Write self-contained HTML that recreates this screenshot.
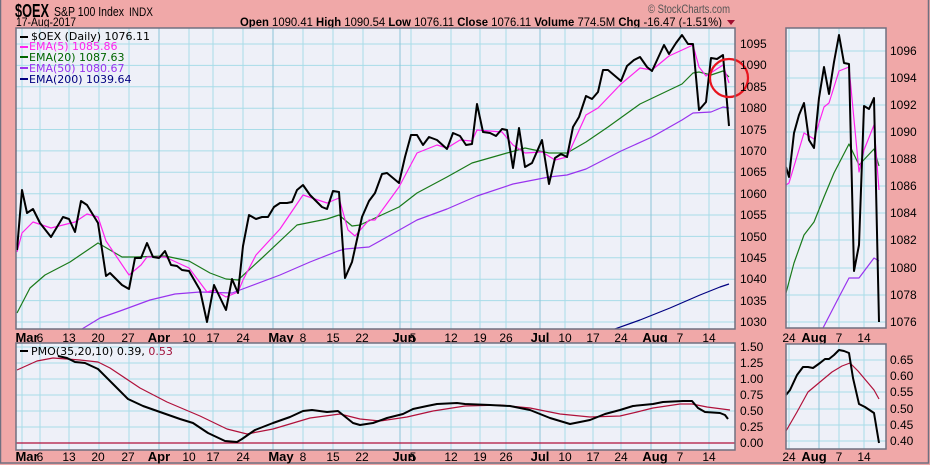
<!DOCTYPE html>
<html><head><meta charset="utf-8"><style>
html,body{margin:0;padding:0;background:#f0a8a8;}
svg{display:block;font-family:"Liberation Sans",Arial,sans-serif;}
.lg{font-family:"DejaVu Sans",sans-serif;font-size:11px;}
.ax{font-size:12px;fill:#000;}
.dt{font-size:12px;fill:#000;text-anchor:middle;}
.mo{font-size:13px;font-weight:bold;fill:#000;text-anchor:middle;}
</style></head><body>
<svg width="930" height="465" viewBox="0 0 930 465" xmlns="http://www.w3.org/2000/svg">
<rect x="0" y="0" width="930" height="465" fill="#f0a8a8"/>
<rect x="0.5" y="-1" width="928" height="464" fill="none" stroke="#707080" stroke-width="1.5"/>

<!-- header -->
<text x="15" y="17" font-size="18" font-weight="bold" textLength="34" lengthAdjust="spacingAndGlyphs">$OEX</text>
<text x="54" y="16" font-size="13" textLength="70" lengthAdjust="spacingAndGlyphs">S&amp;P 100 Index</text>
<text x="129" y="16" font-size="12" textLength="24" lengthAdjust="spacingAndGlyphs">INDX</text>
<text x="16" y="26" font-size="12" textLength="60" lengthAdjust="spacingAndGlyphs">17-Aug-2017</text>
<text x="648" y="13" font-size="12" fill="#555" textLength="82" lengthAdjust="spacingAndGlyphs">© StockCharts.com</text>
<text x="240" y="26" font-size="12" textLength="482" lengthAdjust="spacingAndGlyphs"><tspan font-weight="bold">Open</tspan> 1090.41 <tspan font-weight="bold">High</tspan> 1090.54 <tspan font-weight="bold">Low</tspan> 1076.11 <tspan font-weight="bold">Close</tspan> 1076.11 <tspan font-weight="bold">Volume</tspan> 774.5M <tspan font-weight="bold">Chg</tspan> -16.47 (-1.51%)</text>
<path d="M727 20 L735 20 L731 25 Z" fill="#a01030"/>

<!-- main panel -->
<rect x="16" y="28" width="719" height="301" fill="#eef0f8"/>
<g stroke="#a8dce8" stroke-width="1">
<path d="M16 44H735M16 65.4H735M16 86.8H735M16 108.2H735M16 129.5H735M16 150.9H735M16 172.3H735M16 193.7H735M16 215H735M16 236.4H735M16 257.8H735M16 279.2H735M16 300.6H735M16 322H735"/>
<path d="M22 28V329M40 28V329M69 28V329M99 28V329M129 28V329M189 28V329M213 28V329M243 28V329M303 28V329M333 28V329M363 28V329M411 28V329M451 28V329M480 28V329M506 28V329M565 28V329M593 28V329M621 28V329M680 28V329M709 28V329"/>
</g>
<g stroke="#8cc4d8"><path d="M159 28V329M273 28V329M400 28V329M540 28V329M651 28V329"/></g>
<clipPath id="c1"><rect x="16" y="28" width="719" height="301"/></clipPath>
<g clip-path="url(#c1)" fill="none" stroke-linejoin="round">
<polyline stroke="#000080" stroke-width="1.2" points="612,330 640,320 670,308 700,295 720,287 729,284"/>
<polyline stroke="#9933ee" stroke-width="1.2" points="70,335 82,329 100,318 120,311 150,300 175,294 200,292 232,293 280,275 310,262 338,251 345,249 369,247 387,237 417,220 447,209 477,196 513,184 549,177 567,175 586,169 621,151 652,137 682,120 693,113 711,112 723,107 729,108"/>
<polyline stroke="#1a7a1a" stroke-width="1.2" points="17,313 30,288 45,275 70,262 98,243 122,257 135,257 165,256 189,261 210,273 226,279 238,280 262,258 297,225 327,219 339,215 352,226 360,225 375,218 399,207 417,193 447,177 472,163 507,153 525,148 549,153 567,153 586,142 608,127 640,104 682,84 693,73 699,72 711,75 723,71 729,77"/>
<polyline stroke="#ff22ee" stroke-width="1.2" points="17,252 22,233 33,222 51,228 75,222 87,214 98,217 106,241 129,275 141,265 147,257 165,257 189,268 207,292 214,290 226,297 238,292 243,280 256,255 280,229 303,195 327,203 339,198 348,230 355,236 369,220 375,220 399,187 417,153 437,145 447,148 460,140 472,141 477,130 502,132 513,145 525,153 542,152 555,160 567,157 586,115 598,108 621,84 640,68 652,70 669,56 693,45 699,67 706,76 723,65 729,83"/>
<polyline stroke="#000" stroke-width="2" points="17,250 22,190 27,213 33,209 40,223 51,237 63,217 69,219 75,232 81,201 87,205 98,223 106,276 110,273 122,285 129,289 135,258 141,258 147,243 153,257 159,258 165,251 171,265 177,266 182,270 189,271 200,290 207,322 214,285 226,310 232,279 238,293 243,246 249,215 256,219 262,217 268,217 274,207 280,203 287,203 292,202 297,190 303,185 310,195 322,207 327,209 333,191 339,192 345,278 352,262 362,217 369,201 375,193 382,174 387,173 399,183 405,157 411,135 417,135 423,145 429,137 437,140 447,149 453,133 460,136 466,145 472,144 477,104 483,132 490,133 496,136 502,129 507,130 513,168 519,128 525,167 532,163 542,140 549,184 555,158 561,154 567,157 573,127 579,117 586,96 592,99 598,92 603,70 608,70 621,81 627,66 634,60 640,57 647,67 652,71 658,58 664,45 669,54 676,43 682,35 688,44 693,44 699,110 706,102 711,58 717,59 723,55 729,126"/>
</g>
<circle cx="729" cy="78" r="19" fill="none" stroke="#e8141e" stroke-width="2.2"/>
<rect x="16" y="28" width="719" height="301" fill="none" stroke="#707080" stroke-width="1.5"/>
<g class="ax">
<text x="740" y="48">1095</text><text x="740" y="69">1090</text><text x="740" y="91">1085</text><text x="740" y="112">1080</text><text x="740" y="134">1075</text><text x="740" y="155">1070</text><text x="740" y="176">1065</text><text x="740" y="198">1060</text><text x="740" y="219">1055</text><text x="740" y="241">1050</text><text x="740" y="262">1045</text><text x="740" y="283">1040</text><text x="740" y="305">1035</text><text x="740" y="326">1030</text>
</g>
<g class="lg">
<path d="M20 37h8" stroke="#000" stroke-width="2"/><text x="31" y="40" fill="#000">$OEX (Daily) 1076.11</text>
<path d="M20 47h8" stroke="#ff22ee" stroke-width="2"/><text x="29" y="50" fill="#ff22ee">EMA(5) 1085.86</text>
<path d="M20 57h8" stroke="#006600" stroke-width="2"/><text x="29" y="61" fill="#006600">EMA(20) 1087.63</text>
<path d="M20 68h8" stroke="#9933ee" stroke-width="2"/><text x="29" y="72" fill="#9933ee">EMA(50) 1080.67</text>
<path d="M20 79h8" stroke="#000080" stroke-width="2"/><text x="29" y="83" fill="#000080">EMA(200) 1039.64</text>
</g>

<!-- right price panel -->
<rect x="786" y="28" width="100" height="300" fill="#eef0f8"/>
<g stroke="#a8dce8"><path d="M786 51H886M786 78H886M786 105H886M786 132H886M786 159H886M786 186H886M786 213H886M786 240H886M786 268H886M786 295H886M786 322H886M789 28V328M839 28V328M864 28V328"/></g>
<g stroke="#8cc4d8"><path d="M819 28V328"/></g>
<clipPath id="c2"><rect x="786" y="28" width="100" height="300"/></clipPath>
<g clip-path="url(#c2)" fill="none" stroke-linejoin="round">
<polyline stroke="#9933ee" stroke-width="1.2" points="823,328 839,297 849,278 859,278 874,258 879,261"/>
<polyline stroke="#1a7a1a" stroke-width="1.2" points="786,293 794,263 804,235 814,222 824,197 834,173 849,144 859,165 874,149 879,166"/>
<polyline stroke="#ff22ee" stroke-width="1.2" points="786,185 789,183 804,133 814,139 824,107 829,103 839,71 849,67 859,172 864,150 874,125 879,190"/>
<polyline stroke="#000" stroke-width="2" points="786,167 789,177 794,133 799,115 804,103 809,140 814,148 819,98 824,67 829,94 834,62 839,35 844,63 849,64 854,271 859,245 864,106 869,109 874,98 879,322"/>
</g>
<rect x="786" y="28" width="100" height="300" fill="none" stroke="#707080" stroke-width="1.5"/>
<g class="ax">
<text x="890" y="55">1096</text><text x="890" y="82">1094</text><text x="890" y="109">1092</text><text x="890" y="136">1090</text><text x="890" y="163">1088</text><text x="890" y="190">1086</text><text x="890" y="217">1084</text><text x="890" y="244">1082</text><text x="890" y="272">1080</text><text x="890" y="299">1078</text><text x="890" y="326">1076</text>
</g>

<!-- date rows -->
<g>
<text class="mo" x="27" y="342">Mar</text><text class="dt" x="40" y="342">6</text><text class="dt" x="69" y="342">13</text><text class="dt" x="98" y="342">20</text><text class="dt" x="128" y="342">27</text><text class="mo" x="159" y="342">Apr</text><text class="dt" x="189" y="342">10</text><text class="dt" x="213" y="342">17</text><text class="dt" x="243" y="342">24</text><text class="mo" x="281" y="342">May</text><text class="dt" x="303" y="342">8</text><text class="dt" x="333" y="342">15</text><text class="dt" x="362" y="342">22</text><text class="mo" x="404" y="342">Jun</text><text class="dt" x="413" y="342">5</text><text class="dt" x="451" y="342">12</text><text class="dt" x="480" y="342">19</text><text class="dt" x="506" y="342">26</text><text class="mo" x="540" y="342">Jul</text><text class="dt" x="565" y="342">10</text><text class="dt" x="593" y="342">17</text><text class="dt" x="621" y="342">24</text><text class="mo" x="655" y="342">Aug</text><text class="dt" x="680" y="342">7</text><text class="dt" x="709" y="342">14</text>
<text class="dt" x="789" y="342">24</text><text class="mo" x="814" y="342">Aug</text><text class="dt" x="839" y="342">7</text><text class="dt" x="864" y="342">14</text>
</g>
<g>
<text class="mo" x="27" y="461">Mar</text><text class="dt" x="40" y="461">6</text><text class="dt" x="69" y="461">13</text><text class="dt" x="98" y="461">20</text><text class="dt" x="128" y="461">27</text><text class="mo" x="159" y="461">Apr</text><text class="dt" x="189" y="461">10</text><text class="dt" x="213" y="461">17</text><text class="dt" x="243" y="461">24</text><text class="mo" x="281" y="461">May</text><text class="dt" x="303" y="461">8</text><text class="dt" x="333" y="461">15</text><text class="dt" x="362" y="461">22</text><text class="mo" x="404" y="461">Jun</text><text class="dt" x="413" y="461">5</text><text class="dt" x="451" y="461">12</text><text class="dt" x="480" y="461">19</text><text class="dt" x="506" y="461">26</text><text class="mo" x="540" y="461">Jul</text><text class="dt" x="565" y="461">10</text><text class="dt" x="593" y="461">17</text><text class="dt" x="621" y="461">24</text><text class="mo" x="655" y="461">Aug</text><text class="dt" x="680" y="461">7</text><text class="dt" x="709" y="461">14</text>
<text class="dt" x="789" y="461">24</text><text class="mo" x="814" y="461">Aug</text><text class="dt" x="839" y="461">7</text><text class="dt" x="864" y="461">14</text>
</g>

<!-- PMO panel -->
<rect x="16" y="343" width="719" height="107" fill="#eef0f8"/>
<g stroke="#a8dce8"><path d="M16 347H735M16 363H735M16 379H735M16 395H735M16 411H735M16 427H735M22 343V450M40 343V450M69 343V450M99 343V450M129 343V450M189 343V450M213 343V450M243 343V450M303 343V450M333 343V450M363 343V450M411 343V450M451 343V450M480 343V450M506 343V450M565 343V450M593 343V450M621 343V450M680 343V450M709 343V450"/></g>
<g stroke="#8cc4d8"><path d="M159 343V450M273 343V450M400 343V450M540 343V450M651 343V450"/></g>
<path d="M16 443H735" stroke="#b0103a" stroke-width="1.2"/>
<g fill="none" stroke-linejoin="round">
<polyline stroke="#b0103a" stroke-width="1.2" points="17,370 37,361 53,358 80,360 98,362 110,368 140,388 167,402 200,416 227,429 247,434 273,429 310,418 340,414 360,419 380,421 407,417 433,411 465,406 500,405 530,408 560,414 590,417 620,416 637,412 653,408 680,404 692,404 707,407 730,410"/>
<polyline stroke="#000" stroke-width="2" points="58,356 67,358 75,362 85,363 98,369 113,384 128,399 143,406 160,412 180,419 193,423 208,433 225,441 237,442 242,439 255,430 273,423 290,417 303,411 312,410 327,412 338,411 343,415 353,423 360,425 373,423 387,418 403,414 413,409 427,406 437,404 457,403 465,404 490,405 510,406 530,410 550,418 570,424 590,420 605,414 620,410 633,406 653,404 663,402 683,401 692,401 698,408 705,412 720,413 725,415 728,419"/>
</g>
<rect x="16" y="343" width="719" height="107" fill="none" stroke="#707080" stroke-width="1.5"/>
<g class="lg"><path d="M20 351h8" stroke="#000" stroke-width="2"/><text x="31" y="355" fill="#000">PMO(35,20,10) 0.39, <tspan fill="#a0103a">0.53</tspan></text></g>
<g class="ax">
<text x="740" y="351">1.50</text><text x="740" y="367">1.25</text><text x="740" y="383">1.00</text><text x="740" y="399">0.75</text><text x="740" y="415">0.50</text><text x="740" y="431">0.25</text><text x="740" y="447">0.00</text>
</g>

<!-- right PMO -->
<rect x="786" y="344" width="100" height="105" fill="#eef0f8"/>
<g stroke="#a8dce8"><path d="M786 360H886M786 376H886M786 392H886M786 409H886M786 425H886M786 441H886M789 344V449M839 344V449M864 344V449"/></g>
<g stroke="#8cc4d8"><path d="M819 344V449"/></g>
<g fill="none" stroke-linejoin="round">
<polyline stroke="#b0103a" stroke-width="1.2" points="786,431 797,412 808,392 820,382 832,372 842,366 850,363 858,371 874,390 879,399"/>
<polyline stroke="#000" stroke-width="2" points="786,395 790,390 797,375 803,367 808,367 813,368 820,363 825,359 829,359 834,355 839,350 844,351 849,353 853,378 859,404 865,407 874,413 879,443"/>
</g>
<rect x="786" y="344" width="100" height="105" fill="none" stroke="#707080" stroke-width="1.5"/>
<g class="ax">
<text x="890" y="364">0.65</text><text x="890" y="380">0.60</text><text x="890" y="396">0.55</text><text x="890" y="413">0.50</text><text x="890" y="429">0.45</text><text x="890" y="445">0.40</text>
</g>
</svg>
</body></html>
